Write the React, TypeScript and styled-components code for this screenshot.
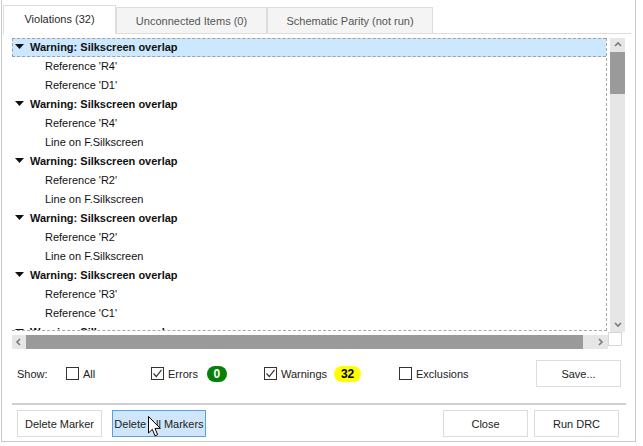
import React from "react";
import styled, { createGlobalStyle } from "styled-components";

const GlobalStyle = createGlobalStyle`
  html, body { margin: 0; padding: 0; background: #ffffff; }
  body {
    font-family: "Liberation Sans", Arial, sans-serif;
    font-size: 11px;
    color: #1a1a1a;
  }
  * { box-sizing: border-box; }
`;

const Dialog = styled.div`
  position: relative;
  margin-left: 1px;
  width: 635px;
  height: 442px;
  border: 1px solid #c9c9c9;
  border-top: none;
  display: flex;
  flex-direction: column;
`;

const TabStrip = styled.div`
  margin: 5px 4px 0 1px;
  height: 29px;
  border-bottom: 1px solid #dddddd;
  display: flex;
  align-items: flex-end;
`;

const Tab = styled.div<{ $active?: boolean; $w: number }>`
  width: ${(p) => p.$w}px;
  height: ${(p) => (p.$active ? 29 : 26)}px;
  margin-bottom: ${(p) => (p.$active ? -1 : 0)}px;
  border: 1px solid #dddddd;
  border-bottom: none;
  background: ${(p) => (p.$active ? "#ffffff" : "#f4f4f4")};
  color: ${(p) => (p.$active ? "#2a2a2a" : "#555555")};
  display: flex;
  align-items: center;
  justify-content: center;
  padding-bottom: ${(p) => (p.$active ? 2 : 0)}px;
`;

const ListArea = styled.div`
  margin: 4px 9px 0 10px;
  display: grid;
  grid-template-columns: 596px 17px;
  grid-template-rows: 294px 17px;
`;

const Viewport = styled.div`
  width: 595px;
  height: 293px;
  overflow: hidden;
  border-right: 1px dashed #a8a8a8;
  border-bottom: 1px dashed #a8a8a8;
`;

const Row = styled.div<{ $level: number; $selected?: boolean }>`
  height: 19px;
  display: flex;
  align-items: center;
  padding-left: ${(p) => (p.$level === 0 ? 2 : 32)}px;
  padding-bottom: 2px;
  font-weight: ${(p) => (p.$level === 0 ? "bold" : "normal")};
  background: ${(p) => (p.$selected ? "#cce8ff" : "transparent")};
  border: 1px dashed ${(p) => (p.$selected ? "#a0a0a0" : "transparent")};
  border-right: none;
  white-space: nowrap;
  color: #111111;
`;

const Expander = styled.svg`
  width: 9px;
  height: 5px;
  margin-right: 6px;
  flex: none;
`;

const VScroll = styled.div`
  justify-self: end;
  width: 15px;
  height: 294px;
  background: #e6e6e6;
  display: flex;
  flex-direction: column;
`;

const ArrowCell = styled.div`
  width: 15px;
  height: 14px;
  flex: none;
  display: flex;
  align-items: center;
  justify-content: center;
`;

const VThumb = styled.div`
  height: 42px;
  background: #9a9a9a;
  flex: none;
`;

const Track = styled.div`
  flex: 1;
`;

const HScroll = styled.div`
  margin-top: 3px;
  width: 596px;
  height: 14px;
  background: #e6e6e6;
  display: flex;
`;

const HArrowCell = styled.div`
  width: 14px;
  height: 14px;
  flex: none;
  display: flex;
  align-items: center;
  justify-content: center;
`;

const HThumb = styled.div`
  width: 557px;
  background: #9a9a9a;
`;

const Corner = styled.div`
  width: 14px;
  height: 14px;
  border: 1px solid #d6d6d6;
  background: #ffffff;
`;

const ShowRow = styled.div`
  margin-top: 11px;
  height: 27px;
  padding: 0 14px 0 15px;
  display: flex;
  align-items: center;
`;

const ShowLabel = styled.span`
  width: 49px;
  color: #222222;
`;

const Filter = styled.label<{ $w?: number }>`
  display: flex;
  align-items: center;
  ${(p) => (p.$w ? `width: ${p.$w}px;` : "flex: 1;")}
  color: #222222;
`;

const Box = styled.span`
  width: 13px;
  height: 13px;
  border: 1px solid #333333;
  background: #ffffff;
  margin-right: 4px;
  display: flex;
  align-items: center;
  justify-content: center;
  flex: none;
`;

const Badge = styled.span<{ $bg: string; $fg: string; $w: number; $gap: number }>`
  margin-left: ${(p) => p.$gap}px;
  width: ${(p) => p.$w}px;
  height: 16px;
  border-radius: 8px;
  background: ${(p) => p.$bg};
  color: ${(p) => p.$fg};
  font-weight: bold;
  font-size: 12px;
  display: flex;
  align-items: center;
  justify-content: center;
`;

const Button = styled.div<{ $w: number; $hover?: boolean }>`
  width: ${(p) => p.$w}px;
  height: 27px;
  border: 1px solid ${(p) => (p.$hover ? "#5b9fde" : "#dcdcdc")};
  background: ${(p) => (p.$hover ? "#cfe6fa" : "#ffffff")};
  color: #222222;
  display: flex;
  align-items: center;
  justify-content: center;
  flex: none;
  position: relative;
`;

const Separator = styled.div`
  margin: 16px 9px 0 10px;
  height: 2px;
  background: #cfcfcf;
`;

const ButtonRow = styled.div`
  margin-top: 5px;
  padding: 0 16px 0 15px;
  height: 27px;
  display: flex;
  align-items: center;
  justify-content: space-between;
`;

const ButtonGroup = styled.div<{ $gap: number }>`
  display: flex;
  gap: ${(p) => p.$gap}px;
`;

const Cursor = styled.svg`
  position: absolute;
  left: 35px;
  top: 5px;
  width: 13px;
  height: 21px;
  pointer-events: none;
`;

const Chevron = ({ dir }: { dir: "up" | "down" | "left" | "right" }) => {
  const pts: Record<string, string> = {
    up: "1,5 4,2 7,5",
    down: "1,2 4,5 7,2",
    left: "5,1 2,4 5,7",
    right: "2,1 5,4 2,7",
  };
  return (
    <svg width="8" height="8" viewBox="0 0 8 8">
      <polyline points={pts[dir]} fill="none" stroke="#7a7a7a" strokeWidth="1.6" />
    </svg>
  );
};

const Check = () => (
  <svg width="11" height="11" viewBox="0 0 11 11">
    <polyline points="1.5,5.5 4.3,8.5 9.5,1.8" fill="none" stroke="#333" strokeWidth="1.2" />
  </svg>
);

type Item = { level: number; text: string };

const groups: [string, string][] = [
  ["Reference 'R4'", "Reference 'D1'"],
  ["Reference 'R4'", "Line on F.Silkscreen"],
  ["Reference 'R2'", "Line on F.Silkscreen"],
  ["Reference 'R2'", "Line on F.Silkscreen"],
  ["Reference 'R3'", "Reference 'C1'"],
  ["Reference 'R1'", "Line on F.Silkscreen"],
];

const items: Item[] = groups.flatMap(([a, b]) => [
  { level: 0, text: "Warning: Silkscreen overlap" },
  { level: 1, text: a },
  { level: 1, text: b },
]);

export default function App() {
  return (
    <>
      <GlobalStyle />
      <Dialog>
        <TabStrip>
          <Tab $active $w={113}>Violations (32)</Tab>
          <Tab $w={151}>Unconnected Items (0)</Tab>
          <Tab $w={166}>Schematic Parity (not run)</Tab>
        </TabStrip>

        <ListArea>
          <Viewport>
            {items.map((it, i) => (
              <Row key={i} $level={it.level} $selected={i === 0}>
                {it.level === 0 && (
                  <Expander viewBox="0 0 9 5">
                    <polygon points="0,0 9,0 4.5,5" fill="#111" />
                  </Expander>
                )}
                {it.text}
              </Row>
            ))}
          </Viewport>
          <VScroll>
            <ArrowCell>
              <Chevron dir="up" />
            </ArrowCell>
            <VThumb />
            <Track />
            <ArrowCell>
              <Chevron dir="down" />
            </ArrowCell>
          </VScroll>
          <HScroll>
            <HArrowCell>
              <Chevron dir="left" />
            </HArrowCell>
            <HThumb />
            <Track />
            <HArrowCell>
              <Chevron dir="right" />
            </HArrowCell>
          </HScroll>
          <Corner />
        </ListArea>

        <ShowRow>
          <ShowLabel>Show:</ShowLabel>
          <Filter $w={85}>
            <Box />
            All
          </Filter>
          <Filter $w={113}>
            <Box>
              <Check />
            </Box>
            Errors
            <Badge $bg="#078007" $fg="#ffffff" $w={20} $gap={9}>0</Badge>
          </Filter>
          <Filter $w={135}>
            <Box>
              <Check />
            </Box>
            Warnings
            <Badge $bg="#ffff00" $fg="#000000" $w={27} $gap={7}>32</Badge>
          </Filter>
          <Filter>
            <Box />
            Exclusions
          </Filter>
          <Button $w={85}>Save...</Button>
        </ShowRow>

        <Separator />

        <ButtonRow>
          <ButtonGroup $gap={10}>
            <Button $w={85}>Delete Marker</Button>
            <Button $w={94} $hover>
              Delete All Markers
              <Cursor viewBox="0 0 13 21">
                <path
                  d="M0.5,0.5 L0.5,17 L4.3,13.3 L7,19.8 L9.6,18.7 L7,12.4 L12.3,12.4 Z"
                  fill="#ffffff"
                  stroke="#000000"
                  strokeWidth="1"
                  strokeLinejoin="miter"
                />
              </Cursor>
            </Button>
          </ButtonGroup>
          <ButtonGroup $gap={6}>
            <Button $w={85}>Close</Button>
            <Button $w={85}>Run DRC</Button>
          </ButtonGroup>
        </ButtonRow>
      </Dialog>
    </>
  );
}
